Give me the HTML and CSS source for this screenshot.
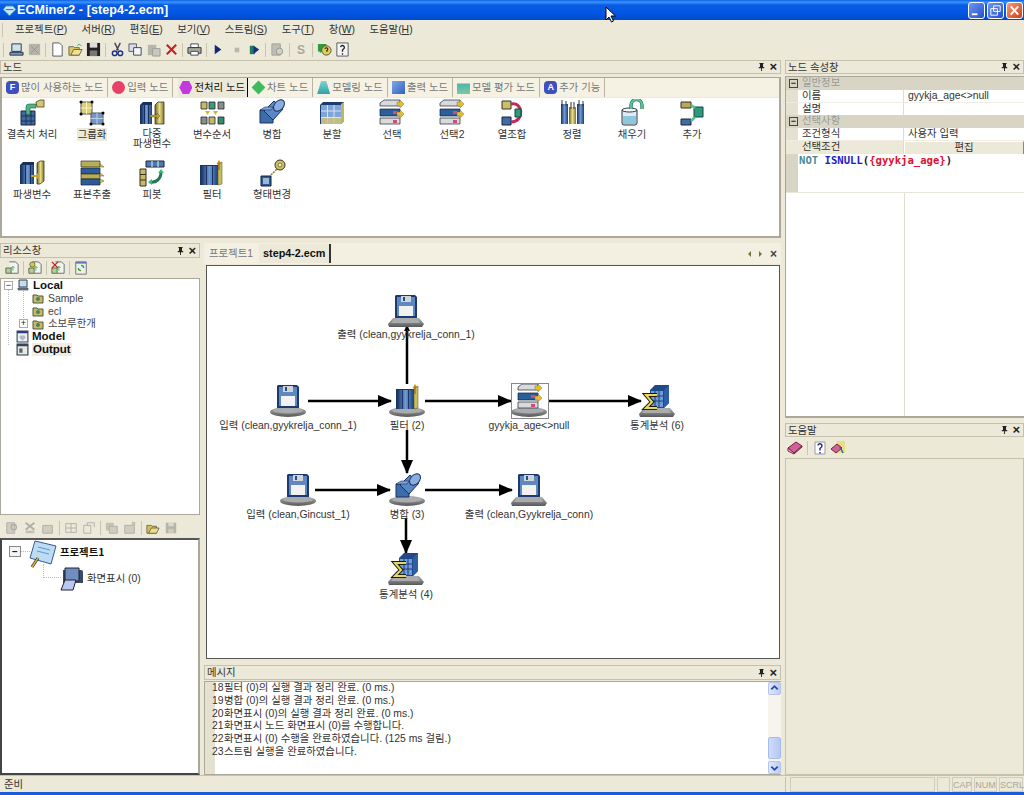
FILE: index.html
```html
<!DOCTYPE html>
<html lang="ko">
<head>
<meta charset="utf-8">
<title>ECMiner2</title>
<link rel="stylesheet" href="styles.css">
</head>
<body>
<svg class="defs" aria-hidden="true">
<defs>
<linearGradient id="gb"><stop offset="0" stop-color="#16305f"/><stop offset=".5" stop-color="#6f9ad2"/><stop offset="1" stop-color="#1d3f78"/></linearGradient>
<linearGradient id="gy"><stop offset="0" stop-color="#6d6420"/><stop offset=".5" stop-color="#e8dc8c"/><stop offset="1" stop-color="#857a2c"/></linearGradient>
<linearGradient id="gd" x2="0" y2="1"><stop offset="0" stop-color="#aeb0b0"/><stop offset="1" stop-color="#56585a"/></linearGradient>
<g id="b-disk"><ellipse cx="19" cy="28" rx="18" ry="5" fill="url(#gd)"/><ellipse cx="19" cy="26.5" rx="15" ry="3" fill="#a9abac"/></g>
<g id="b-trap"><path d="M6 24h26l5 6-2 3H2l-1-3z" fill="url(#gd)"/><path d="M8 24h22l3 5H4z" fill="#a9abac"/></g>
<g id="floppy"><path d="M9 1h19l2 2v21H8V2z" fill="#1d3a70"/><path d="M10 3h18v19H10z" fill="#6088c0"/><path d="M14 2h10v6H14z" fill="#cfd4da"/><path d="M16 3h2v4h-2z" fill="#2b4a80"/><path d="M12 12h14v10H12z" fill="#f2f2f2"/></g>
<g id="filter-i"><path d="M8 5h18v20H8z" fill="#1a3566"/><path d="M9 6h5v19H9zM15 6h5v19h-5zM21 6h5v19h-5z" fill="url(#gb)"/><path d="M26 4l4-2v22l-4 1z" fill="#c9bc5c" stroke="#5a5215" stroke-width=".5"/><path d="M27 0l2.500 4h-5z" fill="#d08a20"/><path d="M26.500 3h1v7h-1z" fill="#8a5a10"/></g>
<g id="merge-i"><path d="M8 11h13v13H8z" fill="#3d6cab" stroke="#183060"/><path d="M12 12l10-10 9 8-10 11z" fill="#5a88c4" stroke="#183060"/><ellipse cx="27" cy="6.500" rx="4.500" ry="6.500" transform="rotate(42 27 6.500)" fill="#89aedd" stroke="#183060"/><path d="M8 11l5-3h8l-2 3z" fill="#7da4d6" stroke="#183060" stroke-width=".6"/></g>
<g id="select-i"><path d="M8 3l4-3h16v6H8z" fill="#d8dadc" stroke="#223" stroke-width=".7"/><path d="M8 9h20v7H8z" fill="#2a5f9c" stroke="#123" stroke-width=".7"/><path d="M8 18h20v6H8z" fill="#d8dadc" stroke="#223" stroke-width=".7"/><path d="M21 11h4v3h-4zM21 20h4v3h-4z" fill="#d44a78"/><path d="M25 2h3V0l4 4-4 4V6h-3zM25 12h3v-2l4 4-4 4v-2h-3z" fill="#e3bd2e" stroke="#665" stroke-width=".4"/></g>
<g id="stat-i"><path d="M12 6l5-5h14v18l-5 5H12z" fill="#20498a"/><path d="M13 7h12v16H13z" fill="#6f9ddc"/><path d="M17 7v16M21 7v16M13 12h12M13 17h12" stroke="#1f3f78" stroke-width="1"/><path d="M26 6l5-5v18l-5 5z" fill="#2d5ea6"/><path d="M19 11H8l6 7-6 6h11" fill="none" stroke="#1c1c10" stroke-width="4"/><path d="M19 11H8l6 7-6 6h11" fill="none" stroke="#e8d860" stroke-width="2"/></g>
<g id="p-grid"><path d="M3 12h14v14H3z" fill="#41689f" stroke="#17284a"/><path d="M8 12v14M13 12v14M3 17h14M3 22h14" stroke="#17284a" stroke-width=".8"/><path d="M8 15V8a3 3 0 0 1 3-3h7v4h-6v7z" fill="#4fb783" stroke="#145a3a" stroke-width=".6"/><path d="M18 3l4-2h4v7h-7z" fill="#d5c676" stroke="#4a4215" stroke-width=".8"/></g>
<g id="p-group"><path d="M3 3h11v12H3z" fill="#dccf7c" stroke="#555"/><path d="M8.500 3v12M3 9h11" stroke="#fff5b8"/><path d="M13 14h12v11H13z" fill="#7397c9" stroke="#555"/><path d="M19 14v11M13 19.500h12" stroke="#bcd0ea"/><circle cx="3" cy="3" r="1.500"/><circle cx="14" cy="3" r="1.500"/><circle cx="3" cy="15" r="1.500"/><circle cx="25" cy="14" r="1.500"/><circle cx="13" cy="25" r="1.500"/><circle cx="25" cy="25" r="1.500"/></g>
<g id="p-cols"><path d="M2 6l3-3h9v22H2z" fill="#17305f"/><path d="M3 6h3v19H3zM7 6h3v19H7zM11 6h3v19h-3z" fill="url(#gb)"/><path d="M17 6l3-3h6v22h-9z" fill="url(#gy)" stroke="#3f3a10" stroke-width=".8"/><path d="M12 16h7v-2l3 3-3 3v-2h-7z" fill="#c7a724" stroke="#443" stroke-width=".4"/></g>
<g id="p-order"><g stroke="#223" stroke-width=".8"><path d="M3 3h6v7H3z" fill="#c7b95e"/><path d="M11 3h6v7h-6z" fill="#3f9a78"/><path d="M20 3h6v7h-6z" fill="#8c8f86"/><path d="M3 18h6v7H3z" fill="#8c8f86"/><path d="M11 18h6v7h-6z" fill="#c7b95e"/><path d="M20 18h6v7h-6z" fill="#2f8f6c"/></g><path d="M7 12h5l-2.500 4zM15 12h5l-2.500 4z" fill="#d0b430"/></g>
<g id="p-merge"><g transform="translate(-6 0)"><use href="#merge-i"/></g></g>
<g id="p-cube"><path d="M2 6l3-3h21v19l-3 3H2z" fill="#1c3c70"/><path d="M3 6h20v19H3z" fill="#7ea4d8"/><path d="M9.500 6v19M16 6v19M3 12h20M3 18.500h20" stroke="#d8e4f4"/><path d="M3 19h20v6H3z" fill="#cfc474" opacity=".8"/><path d="M23 5l3-2v19l-3 3z" fill="#c2b55c"/></g>
<g id="p-select"><g transform="translate(-6 1)"><use href="#select-i"/></g></g>
<g id="p-colmerge"><path d="M4 2h9v8H4z" fill="#cdbf66" stroke="#333"/><path d="M4 18h9v8H4z" fill="#3f6ba8" stroke="#223"/><path d="M13 5c12-3 14 18 0 18" fill="none" stroke="#c22a55" stroke-width="3"/><path d="M17 10h6v8h-6z" fill="#2f9a74" stroke="#145"/></g>
<g id="p-sort"><path d="M3 5h7v20H3z" fill="url(#gb)"/><path d="M11 8h7v17h-7z" fill="url(#gy)"/><path d="M19 5h7v20h-7z" fill="url(#gb)"/><path d="M4 1v6M8 2v5M13 3v7M16 3v7M21 1v6M25 2v5" stroke="#333"/></g>
<g id="p-fill"><path d="M4 11h15v13a2 2 0 0 1-2 2H6a2 2 0 0 1-2-2z" fill="#dcecf2" stroke="#334"/><path d="M5 17h13v8H5z" fill="#8cc8dc"/><ellipse cx="11.500" cy="11" rx="7.500" ry="2" fill="#f4fafc" stroke="#334"/><path d="M13 10V6a5 5 0 0 1 11 0v4" fill="none" stroke="#1d7d5a" stroke-width="3.400"/><path d="M13 10V6a5 5 0 0 1 11 0v4" fill="none" stroke="#62c79a" stroke-width="1.800"/></g>
<g id="p-add"><path d="M3 3h10v6H3z" fill="#b9a95a" stroke="#332"/><path d="M3 20h10v6H3z" fill="#3f6ba8" stroke="#223"/><path d="M16 8h9v10h-9z" fill="#2f9a74" stroke="#145"/><path d="M13 6l4 3M13 22l4-4" stroke="#53c08e" stroke-width="2.500"/></g>
<g id="p-derive"><path d="M2 6l3-3h11v22H2z" fill="#17305f"/><path d="M3 6h4v19H3zM8 6h4v19H8zM13 6h3v19h-3z" fill="url(#gb)"/><path d="M19 4l3-2h4v20l-4 3h-3z" fill="url(#gy)" stroke="#3f3a10" stroke-width=".8"/><path d="M13 16h6v-2l3 3-3 3v-2h-6z" fill="#c7a724"/></g>
<g id="p-sample"><path d="M3 2h19v6H3z" fill="#b9ac56" stroke="#332" stroke-width=".7"/><path d="M3 9h19v6H3z" fill="#2f5c98" stroke="#123" stroke-width=".7"/><path d="M3 15h19v5H3z" fill="#b9ac56" stroke="#332" stroke-width=".7"/><path d="M3 20h19v6H3z" fill="#2f5c98" stroke="#123" stroke-width=".7"/><path d="M22 5l4 3h-4zM22 14l4 3h-4zM22 20l4 2-4 2z" fill="#d8c545" stroke="#554" stroke-width=".5"/></g>
<g id="p-pivot"><path d="M8 2h18v6H8z" fill="#4c7ab6" stroke="#223"/><path d="M14 2v6M20 2v6" stroke="#cfe"/><path d="M2 10h6v17H2z" fill="#c8ba62" stroke="#332"/><path d="M2 15.500h6M2 21h6" stroke="#332"/><path d="M12 23c6 1 11-3 11-10" fill="none" stroke="#1e7a56" stroke-width="3"/><path d="M23 10l3 4h-6zM10 23l4-3v6z" fill="#46b384"/></g>
<g id="p-filter"><g transform="translate(-6 1)"><use href="#filter-i"/></g></g>
<g id="p-morph"><path d="M3 17h10v10H3z" fill="#2f5c98" stroke="#123"/><path d="M5 19h6v6H5z" fill="#9ab6d8"/><path d="M13 16l8-8" stroke="#8c7a20" stroke-width="1.500" stroke-dasharray="2 1"/><circle cx="22" cy="6" r="5" fill="#d2c263" stroke="#332"/><circle cx="22" cy="6" r="2" fill="#f5eebc" stroke="#332" stroke-width=".6"/></g>
<g id="pin"><path d="M2.500 1h5v1h-.8v3.500H8V7H5.500v3h-1V7H2V5.500h1.300V2H2.500z" fill="#222"/></g>
<g id="t-res"><path d="M5 1h7l3 3v10H7" fill="#f4f4ea" stroke="#566"/><path d="M1 8h6v6H1z" fill="#b8cc98" stroke="#564"/><path d="M9 6v5M7 8l2-2 2 2" stroke="#4a7" fill="none"/></g>
</defs>
</svg>

<div class="app">
  <header class="titlebar">
    <svg class="t-logo" viewBox="0 0 14 14"><path d="M3 2h8l3 4-7 7-7-7z" fill="#bfe8f4" stroke="#20708c"/><path d="M3 6h8" stroke="#20708c"/></svg>
    <span class="t-text">ECMiner2 - [step4-2.ecm]</span>
    <svg class="cursor" viewBox="0 0 12 17"><path d="M1 1v13l3-3 2.500 5 2-1-2.500-5h4.500z" fill="#fff" stroke="#000"/></svg>
    <div class="winbtns">
      <span class="wbtn"><svg viewBox="0 0 16 16"><path d="M3 11h6v2H3z" fill="#fff"/></svg></span>
      <span class="wbtn"><svg viewBox="0 0 16 16"><path d="M6 3h7v6H6zM3 6h7v7H3z" fill="none" stroke="#fff"/></svg></span>
      <span class="wbtn close"><svg viewBox="0 0 16 16"><path d="M4 3.500l8 9M12 3.500l-8 9" stroke="#fff" stroke-width="2"/></svg></span>
    </div>
  </header>

  <nav class="menubar">
    <span class="grip"></span>
    <span class="mi">프로젝트(<u>P</u>)</span><span class="mi">서버(<u>R</u>)</span><span class="mi">편집(<u>E</u>)</span><span class="mi">보기(<u>V</u>)</span><span class="mi">스트림(<u>S</u>)</span><span class="mi">도구(<u>T</u>)</span><span class="mi">창(<u>W</u>)</span><span class="mi">도움말(<u>H</u>)</span>
  </nav>

  <div class="toolbar">
    <span class="grip"></span>
    <svg class="tb" viewBox="0 0 16 16"><path d="M3 2h10v8H3z" fill="#cfe0f0" stroke="#234"/><path d="M1 11h14v3H1z" fill="#7d98bd" stroke="#234"/></svg>
    <svg class="tb off" viewBox="0 0 16 16"><path d="M2 2h12v12H2z" fill="#a4a49a"/><path d="M4 4l8 8M12 4l-8 8" stroke="#777"/></svg>
    <i class="sep"></i>
    <svg class="tb" viewBox="0 0 16 16"><path d="M3 1h7l3 3v11H3z" fill="#fff" stroke="#556"/></svg>
    <svg class="tb" viewBox="0 0 16 16"><path d="M1 5h5l1 1h5v8H1z" fill="#e0c860" stroke="#665"/><path d="M3 14l3-6h9l-3 6z" fill="#f4e08c" stroke="#665"/><path d="M10 4c1-2 3-2 4 0" fill="none" stroke="#2a7"/></svg>
    <svg class="tb" viewBox="0 0 16 16"><path d="M1 1h14v14H1z" fill="#222"/><path d="M4 1h8v5H4z" fill="#ddd"/><path d="M4 9h8v6H4z" fill="#777"/></svg>
    <i class="sep"></i>
    <svg class="tb" viewBox="0 0 16 16"><path d="M5 1l4 8M11 1L7 9" stroke="#445" stroke-width="1.500"/><circle cx="5" cy="12" r="2.500" fill="none" stroke="#22348a" stroke-width="1.600"/><circle cx="11" cy="12" r="2.500" fill="none" stroke="#22348a" stroke-width="1.600"/></svg>
    <svg class="tb" viewBox="0 0 16 16"><path d="M1 2h8v8H1z" fill="#d8dcec" stroke="#556"/><path d="M6 6h8v8H6z" fill="#f4f4fa" stroke="#345"/></svg>
    <svg class="tb off" viewBox="0 0 16 16"><path d="M2 3h9v11H2z" fill="#a6a69c"/><path d="M7 7h8v8H7z" fill="#bcbcb2" stroke="#888"/></svg>
    <svg class="tb" viewBox="0 0 16 16"><path d="M3 3l10 10M13 3L3 13" stroke="#c8201c" stroke-width="2.200"/></svg>
    <i class="sep"></i>
    <svg class="tb" viewBox="0 0 16 16"><path d="M4 2h8v4H4z" fill="#fff" stroke="#445"/><path d="M1 6h14v6H1z" fill="#a8a8a0" stroke="#333"/><path d="M4 10h8v4H4z" fill="#fff" stroke="#445"/></svg>
    <i class="sep"></i>
    <svg class="tb" viewBox="0 0 16 16"><path d="M4 3l7 5-7 5z" fill="#14267a"/></svg>
    <svg class="tb off" viewBox="0 0 16 16"><path d="M6 6h5v5H6z" fill="#a8a8a0"/></svg>
    <svg class="tb" viewBox="0 0 16 16"><path d="M3 4h5v9H3z" fill="#1f7a64"/><path d="M7 4l6 4-6 5z" fill="#14307a"/></svg>
    <i class="sep"></i>
    <svg class="tb off" viewBox="0 0 16 16"><path d="M2 2h9v12H2z" fill="#b0b0a6" stroke="#888"/><circle cx="10" cy="10" r="3.500" fill="#c8c8be" stroke="#777"/></svg>
    <i class="sep"></i>
    <span class="tb-s">S</span>
    <i class="sep"></i>
    <svg class="tb" viewBox="0 0 16 16"><path d="M1 2h9v8H5l-2 2v-2H1z" fill="#2f9a3c"/><circle cx="10" cy="9" r="5" fill="#e0cc50" stroke="#554"/><path d="M8.500 7.500a1.500 1.500 0 1 1 2 1.500v1.500" fill="none" stroke="#222" stroke-width="1.200"/></svg>
    <svg class="tb" viewBox="0 0 16 16"><path d="M2 1h12v14H2z" fill="#f6f6f0" stroke="#556"/><path d="M6 5.500a2 2 0 1 1 3 2l-1 1v2M8 12v1.500" fill="none" stroke="#223" stroke-width="1.400"/></svg>
  </div>

  <div class="workspace">
    <div class="left-area">
      <section class="panel nodes-panel">
        <div class="ptitle"><span>노드</span><span class="pctl"><svg class="pin" viewBox="0 0 10 11"><use href="#pin"/></svg><b>×</b></span></div>
        <div class="nodes-body">
          <div class="ptabs">
            <span class="ptab"><i class="tico tf">F</i>많이 사용하는 노드</span>
            <span class="ptab"><i class="tico tr"></i>입력 노드</span>
            <span class="ptab active"><i class="tico tp"></i>전처리 노드</span>
            <span class="ptab"><i class="tico td"></i>차트 노드</span>
            <span class="ptab"><i class="tico tt"></i>모델링 노드</span>
            <span class="ptab"><i class="tico ts"></i>출력 노드</span>
            <span class="ptab"><i class="tico tc"></i>모델 평가 노드</span>
            <span class="ptab"><i class="tico tf">A</i>추가 기능</span>
          </div>
          <div class="palette">
            <div class="pitem"><svg viewBox="0 0 28 28"><use href="#p-grid"/></svg><span>결측치 처리</span></div>
            <div class="pitem"><svg viewBox="0 0 28 28"><use href="#p-group"/></svg><span class="hl">그룹화</span></div>
            <div class="pitem"><svg viewBox="0 0 28 28"><use href="#p-cols"/></svg><span class="two"><span>다중</span><span>파생변수</span></span></div>
            <div class="pitem"><svg viewBox="0 0 28 28"><use href="#p-order"/></svg><span>변수순서</span></div>
            <div class="pitem"><svg viewBox="0 0 28 28"><use href="#p-merge"/></svg><span>병합</span></div>
            <div class="pitem"><svg viewBox="0 0 28 28"><use href="#p-cube"/></svg><span>분할</span></div>
            <div class="pitem"><svg viewBox="0 0 28 28"><use href="#p-select"/></svg><span>선택</span></div>
            <div class="pitem"><svg viewBox="0 0 28 28"><use href="#p-select"/></svg><span>선택2</span></div>
            <div class="pitem"><svg viewBox="0 0 28 28"><use href="#p-colmerge"/></svg><span>열조합</span></div>
            <div class="pitem"><svg viewBox="0 0 28 28"><use href="#p-sort"/></svg><span>정렬</span></div>
            <div class="pitem"><svg viewBox="0 0 28 28"><use href="#p-fill"/></svg><span>채우기</span></div>
            <div class="pitem"><svg viewBox="0 0 28 28"><use href="#p-add"/></svg><span>추가</span></div>
            <div class="pitem"><svg viewBox="0 0 28 28"><use href="#p-derive"/></svg><span>파생변수</span></div>
            <div class="pitem"><svg viewBox="0 0 28 28"><use href="#p-sample"/></svg><span>표본추출</span></div>
            <div class="pitem"><svg viewBox="0 0 28 28"><use href="#p-pivot"/></svg><span>피봇</span></div>
            <div class="pitem"><svg viewBox="0 0 28 28"><use href="#p-filter"/></svg><span>필터</span></div>
            <div class="pitem"><svg viewBox="0 0 28 28"><use href="#p-morph"/></svg><span>형태변경</span></div>
          </div>
        </div>
      </section>

      <div class="lower">
        <aside class="res-col">
          <div class="ptitle"><span>리소스창</span><span class="pctl"><svg class="pin" viewBox="0 0 10 11"><use href="#pin"/></svg><b>×</b></span></div>
          <div class="subbar">
            <svg class="tb" viewBox="0 0 16 16"><use href="#t-res"/></svg>
            <i class="sep"></i>
            <svg class="tb" viewBox="0 0 16 16"><use href="#t-res"/><circle cx="5" cy="4" r="3" fill="#d8c840" stroke="#665"/></svg>
            <i class="sep"></i>
            <svg class="tb" viewBox="0 0 16 16"><use href="#t-res"/><path d="M1 1l7 7M8 1L1 8" stroke="#c82020" stroke-width="1.400"/></svg>
            <i class="sep"></i>
            <svg class="tb" viewBox="0 0 16 16"><path d="M2 1h12v14H2z" fill="#eef2e4" stroke="#667"/><path d="M2 1h12v2H2z" fill="#5a7ab8"/><path d="M8 5a3 3 0 0 1 3 3M8 11a3 3 0 0 1-3-3" fill="none" stroke="#3a9a50" stroke-width="1.500"/></svg>
          </div>
          <div class="tree">
            <i class="tl tl-v1"></i><i class="tl tl-v2"></i>
            <div class="trow"><span class="exp">−</span><svg class="ti" viewBox="0 0 12 12"><path d="M2 1h8v7H2z" fill="#c8dcf0" stroke="#345"/><path d="M1 9h10v2H1z" fill="#778" stroke="#345" stroke-width=".6"/></svg><b>Local</b></div>
            <div class="trow l2"><svg class="ti" viewBox="0 0 12 12"><path d="M1 3h4l1 1h5v7H1z" fill="#c8ba62" stroke="#554"/><circle cx="6" cy="7" r="2" fill="#3f8a5a"/></svg><span>Sample</span></div>
            <div class="trow l2"><svg class="ti" viewBox="0 0 12 12"><path d="M1 3h4l1 1h5v7H1z" fill="#c8ba62" stroke="#554"/><circle cx="6" cy="7" r="2" fill="#3f8a5a"/></svg><span>ecl</span></div>
            <div class="trow l2 withexp"><span class="exp small">+</span><svg class="ti" viewBox="0 0 12 12"><path d="M1 3h4l1 1h5v7H1z" fill="#c8ba62" stroke="#554"/><circle cx="6" cy="7" r="2" fill="#3f8a5a"/></svg><span>소보루한개</span></div>
            <div class="trow l1"><svg class="ti" viewBox="0 0 12 12"><path d="M1 1h10v10H1z" fill="#f0f0f4" stroke="#345"/><path d="M1 1h10v2H1z" fill="#2a3a8a"/><path d="M4 5h4l1 2-3 3-3-3z" fill="#b0b8c8"/></svg><b>Model</b></div>
            <div class="trow l1"><svg class="ti" viewBox="0 0 12 12"><path d="M1 1h10v10H1z" fill="#e8e8e0" stroke="#234"/><path d="M1 1h10v2H1z" fill="#345"/><path d="M3 5h3v4H3z" fill="#567"/></svg><b class="sel">Output</b></div>
          </div>
          <div class="subbar second">
            <svg class="tb off" viewBox="0 0 16 16"><path d="M2 2h9v12H2z" fill="#c4c4b8" stroke="#999"/><circle cx="10" cy="7" r="3" fill="none" stroke="#999" stroke-width="1.500"/></svg>
            <svg class="tb off" viewBox="0 0 16 16"><path d="M3 2l10 8M13 2L3 10" stroke="#999" stroke-width="2"/><path d="M3 11h10v3H3z" fill="#b4b4a8"/></svg>
            <svg class="tb off" viewBox="0 0 16 16"><path d="M2 5h11v9H2z" fill="#c4c4b8" stroke="#999"/></svg>
            <i class="sep"></i>
            <svg class="tb off" viewBox="0 0 16 16"><path d="M2 3h12v10H2zM8 3v10M2 8h12" fill="none" stroke="#999"/></svg>
            <svg class="tb off" viewBox="0 0 16 16"><path d="M2 5h8v9H2zM6 5V2h8v5" fill="none" stroke="#999"/></svg>
            <i class="sep"></i>
            <svg class="tb off" viewBox="0 0 16 16"><path d="M1 2h9v9H1z" fill="#b4b4a8"/><path d="M5 6h9v8H5z" fill="#c4c4b8" stroke="#999"/></svg>
            <svg class="tb off" viewBox="0 0 16 16"><path d="M2 5h11v9H2z" fill="#c4c4b8" stroke="#999"/><path d="M10 1h4v4h-4z" fill="#b4b4a8"/></svg>
            <i class="sep"></i>
            <svg class="tb" viewBox="0 0 16 16"><path d="M1 5h5l1 1h5v8H1z" fill="#d8c050" stroke="#665"/><path d="M3 14l3-6h9l-3 6z" fill="#f0dc80" stroke="#665"/></svg>
            <svg class="tb off" viewBox="0 0 16 16"><path d="M2 2h12v12H2z" fill="#a4a49a"/><path d="M5 2h6v4H5z" fill="#d4d4c8"/><path d="M5 9h6v5H5z" fill="#c4c4b8"/></svg>
          </div>
          <div class="ptree">
            <i class="tl tl-p1"></i><i class="tl tl-p2"></i>
            <div class="prow"><span class="exp big">−</span>
              <svg class="pt-ico" viewBox="0 0 28 30"><path d="M6 1l21 5-5 18L1 18z" fill="#bcdcf4" stroke="#3a5a8a"/><path d="M9 7l12 3M8 11l12 3" stroke="#5a9ad0"/><path d="M9 18l-6 9" stroke="#333" stroke-width="3"/><path d="M9 18l-6 9" stroke="#d8b040" stroke-width="1.500"/></svg>
              <b>프로젝트1</b></div>
            <div class="prow child">
              <svg class="pt-ico2" viewBox="0 0 24 26"><path d="M3 5h18a2 2 0 0 1 2 2v11H3z" fill="#384a68"/><path d="M5 3h14v13H5z" fill="#6f8fc0" stroke="#223"/><path d="M5 15h11l-3 10H1z" fill="#b8c8f0" stroke="#223"/></svg>
              <span>화면표시 (0)</span></div>
          </div>
        </aside>

        <main class="center">
          <div class="doc-tabs">
            <span class="dt">프로젝트1</span>
            <span class="dt on">step4-2.ecm</span>
            <span class="dt-arrows"><i class="ar l"></i><i class="ar r"></i><b>×</b></span>
          </div>
          <div class="canvas">
            <svg class="wires" viewBox="0 0 571 392">
              <defs><marker id="ah" markerWidth="14" markerHeight="12" refX="13" refY="6" orient="auto" markerUnits="userSpaceOnUse"><path d="M0 0l14 6-14 6z" fill="#000"/></marker>
              <marker id="ah2" markerWidth="6" markerHeight="6" refX="5" refY="3" orient="auto" markerUnits="userSpaceOnUse"><path d="M0 0l6 3-6 3z" fill="#000"/></marker></defs>
              <g class="wire">
                <path d="M101 135h83" marker-end="url(#ah)"/>
                <path d="M218 135h86" marker-end="url(#ah)"/>
                <path d="M342 135h92" marker-end="url(#ah)"/>
                <path d="M108 224h75" marker-end="url(#ah)"/>
                <path d="M218 224h87" marker-end="url(#ah)"/>
                <path d="M200 118V60" marker-end="url(#ah2)"/>
                <path d="M200 164v43" marker-end="url(#ah)"/>
                <path d="M199 252v35" marker-end="url(#ah)"/>
              </g>
            </svg>
            <div class="node n1"><svg viewBox="0 0 38 34"><use href="#b-trap"/><use href="#floppy"/></svg><span>출력 (clean,gyykrelja_conn_1)</span></div>
            <div class="node n2"><svg viewBox="0 0 38 34"><use href="#b-disk"/><use href="#floppy"/></svg><span>입력 (clean,gyykrelja_conn_1)</span></div>
            <div class="node n3"><svg viewBox="0 0 38 34"><use href="#b-disk"/><use href="#filter-i"/></svg><span>필터 (2)</span></div>
            <div class="selbox"></div>
            <div class="node n4"><svg viewBox="0 0 38 34"><use href="#b-disk"/><use href="#select-i"/></svg><span>gyykja_age&lt;&gt;null</span></div>
            <div class="node n5"><svg viewBox="0 0 38 34"><use href="#b-trap"/><use href="#stat-i"/></svg><span>통계분석 (6)</span></div>
            <div class="node n6"><svg viewBox="0 0 38 34"><use href="#b-disk"/><use href="#floppy"/></svg><span>입력 (clean,Gincust_1)</span></div>
            <div class="node n7"><svg viewBox="0 0 38 34"><use href="#b-disk"/><use href="#merge-i"/></svg><span>병합 (3)</span></div>
            <div class="node n8"><svg viewBox="0 0 38 34"><use href="#b-trap"/><use href="#floppy"/></svg><span>출력 (clean,Gyykrelja_conn)</span></div>
            <div class="node n9"><svg viewBox="0 0 38 34"><use href="#b-trap"/><use href="#stat-i"/></svg><span>통계분석 (4)</span></div>
          </div>
          <div class="ptitle msg-title"><span>메시지</span><span class="pctl"><svg class="pin" viewBox="0 0 10 11"><use href="#pin"/></svg><b>×</b></span></div>
          <div class="messages">
            <div class="mlines">
              <div class="ml"><i>18</i>필터 (0)의 실행 결과 정리 완료. (0 ms.)</div>
              <div class="ml"><i>19</i>병합 (0)의 실행 결과 정리 완료. (0 ms.)</div>
              <div class="ml"><i>20</i>화면표시 (0)의 실행 결과 정리 완료. (0 ms.)</div>
              <div class="ml"><i>21</i>화면표시 노드 화면표시 (0)를 수행합니다.</div>
              <div class="ml"><i>22</i>화면표시 (0) 수행을 완료하였습니다. (125 ms 걸림.)</div>
              <div class="ml"><i>23</i>스트림 실행을 완료하였습니다.</div>
            </div>
            <div class="vscroll">
              <span class="sbtn"><svg viewBox="0 0 12 12"><path d="M2.500 7L6 3.500 9.500 7" fill="none" stroke="#2a4aa0" stroke-width="2"/></svg></span>
              <span class="strack"><span class="sthumb"></span></span>
              <span class="sbtn"><svg viewBox="0 0 12 12"><path d="M2.500 5L6 8.500 9.500 5" fill="none" stroke="#2a4aa0" stroke-width="2"/></svg></span>
            </div>
          </div>
        </main>
      </div>
    </div>

    <div class="right-col">
      <div class="ptitle"><span>노드 속성창</span><span class="pctl"><svg class="pin" viewBox="0 0 10 11"><use href="#pin"/></svg><b>×</b></span></div>
      <div class="props">
        <div class="pgroup"><span class="exp flat">−</span>일반정보</div>
        <div class="prop"><span>이름</span><span>gyykja_age&lt;&gt;null</span></div>
        <div class="prop"><span>설명</span><span></span></div>
        <div class="pgroup"><span class="exp flat">−</span>선택사항</div>
        <div class="prop"><span>조건형식</span><span>사용자 입력</span></div>
        <div class="prop grayrow"><span>선택조건</span><span class="pbtn">편집</span></div>
        <div class="editor"><code><span class="k1">NOT</span> <span class="k2">ISNULL</span>(<span class="k3">{gyykja_age}</span>)</code></div>
        <div class="prop-rest"></div>
      </div>
      <div class="ptitle help-title"><span>도움말</span><span class="pctl"><svg class="pin" viewBox="0 0 10 11"><use href="#pin"/></svg><b>×</b></span></div>
      <div class="subbar helpbar">
        <svg class="tb" viewBox="0 0 16 16"><path d="M1 8l8-6 6 4-8 7z" fill="#d060a0" stroke="#723"/><path d="M1 8v3l6 3 8-7V6l-8 7z" fill="#f0c0d8" stroke="#723"/></svg>
        <i class="sep"></i>
        <svg class="tb" viewBox="0 0 16 16"><path d="M3 2h10v12H3z" fill="#fff" stroke="#99a"/><path d="M6 5.500a2 2 0 1 1 3 2l-1 1v2M8 12v1.500" fill="none" stroke="#228" stroke-width="1.400"/></svg>
        <svg class="tb" viewBox="0 0 16 16"><path d="M7 1h8v12H7z" fill="#e8e080"/><path d="M1 9l6-5 5 4-6 5z" fill="#d060a0" stroke="#723"/><path d="M10 7l3 6" stroke="#36a" stroke-width="1.500"/></svg>
      </div>
      <div class="help-body"></div>
    </div>
  </div>

  <footer class="statusbar">
    <span class="st-main">준비</span>
    <span class="st-box wide"></span>
    <span class="st-box blank"></span>
    <span class="st-box cap">CAP</span>
    <span class="st-box num">NUM</span>
    <span class="st-box scrl">SCRL</span>
  </footer>
  <div class="bottomline"></div>
</div>
</body>
</html>
```

FILE: styles.css
```css
* { box-sizing: border-box; }
html, body { margin: 0; padding: 0; height: 100%; overflow: hidden; }
body { font: 10.4px/13px "Liberation Sans", "Noto Sans CJK KR", sans-serif; color: #222; background: #ece9d8; }
i { font-style: normal; }
.defs { position: absolute; width: 0; height: 0; }

.app { width: 1024px; height: 795px; display: flex; flex-direction: column; }

.titlebar { height: 20px; flex: none; position: relative; display: flex; align-items: center; padding: 0 1px 0 3px;
  background: linear-gradient(#0a5fe8 0, #3a96fa 2px, #0a5ce6 5px, #0055e2 14px, #0048c8 20px); color: #fff; }
.t-logo { width: 13px; height: 13px; flex: none; }
.t-text { margin-left: 1px; font: bold 12.5px/16px "Liberation Sans", sans-serif; letter-spacing: .08px; color: #fff; }
.cursor { position: absolute; left: 605px; top: 6px; width: 12px; height: 17px; }
.winbtns { margin-left: auto; display: flex; gap: 2px; }
.wbtn { width: 17px; height: 17px; border: 1px solid #fff; border-radius: 3px; background: linear-gradient(135deg, #6f96f0, #2350cc); display: block; }
.wbtn svg { display: block; width: 15px; height: 15px; }
.wbtn.close { background: linear-gradient(135deg, #f09a78, #d0401c); }

.menubar { height: 19px; flex: none; display: flex; align-items: center; padding-left: 2px; }
.grip { width: 2px; height: 14px; flex: none; border-left: 1px solid #c8c4b0; }
.menubar .grip { margin-right: 10px; }
.mi { padding: 0 8px 0 1px; margin-right: 5.500px; white-space: nowrap; color: #333; }
.mi u { text-decoration: underline; }

.toolbar { height: 21px; flex: none; display: flex; align-items: center; padding-left: 3px; }
.toolbar .grip { margin-right: 2px; }
.tb { width: 14px; height: 14px; flex: none; margin: 0 2px; display: block; }
.toolbar .tb { width: 15px; height: 15px; margin: 0 1.500px; }
.off { opacity: .75; }
.sep { width: 1px; height: 14px; flex: none; margin: 0 3px; background: #c8c4b0; }
.toolbar .sep { margin: 0 2.250px; }
.tb-s { width: 18px; flex: none; text-align: center; color: #a8a89c; font: bold 12px "Liberation Sans", sans-serif; }

.workspace { flex: 1; min-height: 0; display: flex; }
.left-area { width: 781px; flex: none; display: flex; flex-direction: column; }
.right-col { width: 239px; margin-left: 4px; flex: none; display: flex; flex-direction: column; }

.ptitle { height: 14px; flex: none; display: flex; align-items: center; justify-content: space-between; padding: 0 3px 0 2px; border: 1px solid #c4c1ac; background: #ece9d8; color: #333; white-space: nowrap; }
.pctl { display: flex; align-items: center; gap: 3px; }
.pin { width: 9px; height: 10px; display: block; }
.pctl b { font: bold 13px/12px "Liberation Sans", sans-serif; color: #222; }

.nodes-panel { height: 178px; flex: none; display: flex; flex-direction: column; }
.nodes-body { margin-top: 3px; flex: 1; min-height: 0; border: 1px solid #aca899; border-width: 1px 2px 2px 2px; background: #fff; display: flex; flex-direction: column; }
.ptabs { height: 20px; flex: none; display: flex; align-items: center; background: #f5f2e3; padding-left: 3px; color: #777; border-bottom: 1px solid #ece9d8; }
.ptab { display: flex; align-items: center; gap: 2px; height: 19px; padding: 0 4px 0 1px; margin-right: 3px; border-right: 1px solid #b8b4a0; white-space: nowrap; }
.ptab.active { background: #ece9d8; color: #111; border-right: 1px solid #000; padding: 0 2px 0 1px; margin-left: 2px; }
.tico { width: 13px; height: 13px; display: block; flex: none; font: bold 9px/13px "Liberation Sans", sans-serif; text-align: center; color: #fff; }
.tf { background: #3f4fc0; border-radius: 4px; }
.tr { background: #e8406a; border-radius: 50%; }
.tp { background: #c03ae0; clip-path: polygon(25% 0, 75% 0, 100% 50%, 75% 100%, 25% 100%, 0 50%); }
.td { background: #3cbc5c; transform: rotate(45deg) scale(.75); }
.tt { background: linear-gradient(#7fd4d4, #30a0a8); clip-path: polygon(30% 0, 70% 0, 100% 100%, 0 100%); }
.ts { background: linear-gradient(135deg, #7fa8e8, #3060c0); }
.tc { background: linear-gradient(#40b0b0, #80c8a0); clip-path: polygon(0 20%, 100% 20%, 100% 100%, 0 100%); }

.palette { flex: 1; display: grid; grid-template-columns: repeat(12, 60px); grid-auto-rows: 60px; padding-top: 1px; align-content: start; }
.pitem { display: flex; flex-direction: column; align-items: center; text-align: center; color: #333; line-height: 13px; white-space: nowrap; }
.pitem svg { width: 28px; height: 28px; flex: none; margin-bottom: 1px; }
.hl { background: #ece9d8; padding: 0 1px; }
.two { display: flex; flex-direction: column; }
.two span { height: 10px; line-height: 11px; }

.lower { flex: 1; min-height: 0; display: flex; margin-top: 5px; }
.res-col { width: 200px; flex: none; display: flex; flex-direction: column; }
.res-col > .ptitle { height: 15px; }
.subbar { height: 20px; flex: none; display: flex; align-items: center; padding-left: 4px; }
.subbar .tb { margin: 0 1px; }
.subbar .sep { margin: 0 3px; }
.tree { height: 237px; flex: none; position: relative; background: #fff; border: 1px solid #aca899; }
.trow { height: 12.800px; display: flex; align-items: center; gap: 4px; padding-left: 17px; color: #333; white-space: nowrap; position: relative; }
.trow b { font: bold 11.500px/13px "Liberation Sans", "Noto Sans CJK KR", sans-serif; color: #111; }
.trow:first-of-type { padding-left: 16px; }
.trow .ti { width: 12px; height: 12px; flex: none; }
.trow.l2 { padding-left: 31px; }
.trow.l2 span:not(.exp) { color: #444; }
.trow.l1 { padding-left: 15px; gap: 3px; }
.trow.l1 .ti { width: 13px; height: 13px; }
.sel { background: #f0eee2; padding: 0 1px; }
.exp { position: absolute; left: 3px; top: 2px; width: 9px; height: 9px; border: 1px solid #aaa; background: #fff; color: #222; font: 9px/7px "Liberation Sans", sans-serif; text-align: center; }
.exp.small { left: 18px; }
.tl { position: absolute; display: block; border-color: #bbb; border-style: dotted; border-width: 0; }
.tl-v1 { left: 22px; top: 9px; height: 32px; width: 8px; border-left-width: 1px; }
.tl-v2 { left: 7px; top: 11px; height: 55px; width: 8px; border-left-width: 1px; }

.subbar.second { margin-top: 3px; padding-left: 3px; }
.subbar.second .tb { margin: 0 2px; }
.subbar.second .sep { margin: 0 2px; }
.ptree { flex: 1; min-height: 0; position: relative; background: #fff; border: 2px solid #555; border-color: #555 #aca899 #444 #444; color: #333; }
.prow { display: flex; align-items: center; white-space: nowrap; }
.exp.big { left: 7px; top: 6px; width: 12px; height: 11px; border-color: #888; font: bold 10px/9px "Liberation Sans", sans-serif; background: #f4f4f4; }
.pt-ico { width: 28px; height: 30px; margin-left: 27px; flex: none; }
.prow b { margin-left: 3px; font: bold 10.400px/13px "Noto Sans CJK KR", sans-serif; color: #111; margin-top: -7px; }
.pt-ico2 { width: 24px; height: 26px; flex: none; margin-left: 58px; }
.prow.child { margin-top: -5px; }
.prow.child span { margin-left: 3px; }
.tl-p1 { left: 41px; top: 24px; height: 14px; width: 18px; border-left-width: 1px; border-bottom-width: 1px; }
.tl-p2 { left: 18px; top: 11px; width: 10px; border-top-width: 1px; }

.center { flex: 1; min-width: 0; margin-left: 4px; display: flex; flex-direction: column; }
.doc-tabs { height: 21px; flex: none; display: flex; align-items: center; padding-left: 5px; background: #f3f0e2; }
.dt { color: #777; padding-right: 4px; white-space: nowrap; }
.dt.on { font: bold 10.800px/19px "Liberation Sans", sans-serif; color: #111; background: #ece9d8; padding: 0 4px; margin-left: 2px; border-right: 2px solid #333; height: 19px; }
.dt-arrows { margin-left: auto; display: flex; align-items: center; gap: 8px; padding-right: 4px; }
.dt-arrows b { font: bold 12px/12px "Liberation Sans", sans-serif; color: #444; }
.ar { width: 0; height: 0; border: 3.500px solid transparent; display: block; }
.ar.l { border-right-color: #6a7a3a; border-left-width: 0; }
.ar.r { border-left-color: #6a7a3a; border-right-width: 0; }

.canvas { height: 394px; flex: none; margin: 1px 1px 0 2px; position: relative; background: #fff; border: 1px solid #555; overflow: hidden; }
.wires { position: absolute; left: 0; top: 0; width: 571px; height: 392px; }
.wire path { fill: none; stroke: #000; stroke-width: 2.500px; }
.node { position: absolute; width: 170px; display: flex; flex-direction: column; align-items: center; white-space: nowrap; color: #333; }
.node svg { width: 38px; height: 34px; flex: none; display: block; }
.node span { line-height: 13px; margin-top: 1px; }
.n1 { left: 114px; top: 28px; }
.n1 span { margin-top: 0; }
.n2 { left: -4px; top: 118px; }
.n3 { left: 115px; top: 118px; }
.n4 { left: 237px; top: 118px; }
.n5 { left: 365px; top: 118px; }
.n6 { left: 6px; top: 207px; }
.n7 { left: 115px; top: 207px; }
.n8 { left: 237px; top: 207px; }
.n9 { left: 114px; top: 286px; }
.n9 span { margin-top: 2px; }
.selbox { position: absolute; left: 304px; top: 117px; width: 38px; height: 36px; border: 1px solid #888; background: #fff; }

.msg-title { margin-top: 6px; height: 15px; }
.messages { flex: 1; min-height: 0; margin-top: 1px; display: flex; border: 1px solid #aca899; background: #fff; border-right: 0; overflow: hidden; }
.mlines { flex: 1; min-width: 0; margin-top: -1px; background: linear-gradient(90deg, #e4e1d0 0, #e4e1d0 10px, #fff 10px); padding-left: 7px; }
.ml { height: 12.800px; line-height: 13px; white-space: nowrap; color: #333; }
.ml i { display: inline-block; width: 11px; margin-right: 1px; text-align: center; }
.vscroll { width: 13px; flex: none; display: flex; flex-direction: column; background: #f6f4ec; }
.sbtn { height: 13px; flex: none; background: linear-gradient(90deg, #e0e8fc, #bccdf4); border: 1px solid #b4c4ec; border-radius: 2px; display: block; }
.sbtn svg { display: block; width: 11px; height: 11px; }
.strack { flex: 1; display: flex; align-items: flex-end; padding-bottom: 2px; }
.sthumb { display: block; width: 100%; height: 22px; background: linear-gradient(90deg, #d0dcfa, #b4c8f4); border: 1px solid #a8bcec; border-radius: 2px; }

.props { height: 342px; flex: none; margin-top: 2px; background: #fff; border: 1px solid #aca899; border-width: 1px 0 2px 1px; display: flex; flex-direction: column; color: #333; }
.pgroup { height: 12.800px; flex: none; background: #d8d5c4; color: #999; padding-left: 16px; position: relative; line-height: 12.800px; }
.exp.flat { left: 3px; top: 2px; background: transparent; border-color: #444; font: bold 9px/7px "Liberation Sans", sans-serif; }
.prop { height: 12.800px; flex: none; display: grid; grid-template-columns: 118px 1fr; background: linear-gradient(90deg, #e4e1d0 0, #e4e1d0 12px, transparent 12px); }
.prop span { padding-left: 4px; border-bottom: 1px solid #f0eee4; white-space: nowrap; line-height: 12px; }
.prop span:first-child { padding-left: 16px; border-right: 1px solid #e0ddd0; }
.grayrow { background: #ece9d8; }
.pbtn { background: #ece9d8; text-align: center; border: 1px solid #fff; border-color: #fff #8a8878 #8a8878 #fff; padding: 0 !important; }
.editor { height: 39px; flex: none; padding: 0 0 0 13px; background: linear-gradient(90deg, #d8d5c4 0, #d8d5c4 12px, #fff 12px); border-bottom: 1px solid #e8e6da; }
.editor code { font: bold 10.600px/13px "DejaVu Sans Mono", "Liberation Mono", monospace; color: #222; white-space: pre; }
.k1 { color: #4a8a96; }
.k2 { color: #1c1cc8; }
.k3 { color: #e01030; }
.prop-rest { flex: 1; background: linear-gradient(90deg, transparent 118px, #e0ddd0 118px, #e0ddd0 119px, transparent 119px); }
.help-title { margin-top: 5px; }
.helpbar { height: 21px; padding-left: 1px; }
.helpbar .tb { width: 16px; height: 16px; }
.help-body { flex: 1; min-height: 0; border: 1px solid #c4c1ac; background: #ece9d8; }

.statusbar { height: 17px; flex: none; display: flex; gap: 2px; align-items: stretch; padding: 1px 1px 0 0; border-top: 1px solid #c4c1ac; }
.st-main { width: 786px; padding-left: 4px; color: #333; border-right: 1px solid #c4c1ac; line-height: 15px; }
.st-box { border: 1px solid #d0cdbc; color: #a8a698; text-align: center; font: 9px/14px "Liberation Sans", sans-serif; flex: none; }
.st-box.wide { width: 145px; margin-left: 2px; }
.st-box.blank { width: 13px; }
.st-box.cap { width: 20px; }
.st-box.num { width: 23px; }
.st-box.scrl { width: 24px; }
.bottomline { height: 3px; flex: none; background: #1c5cd8; }
```
